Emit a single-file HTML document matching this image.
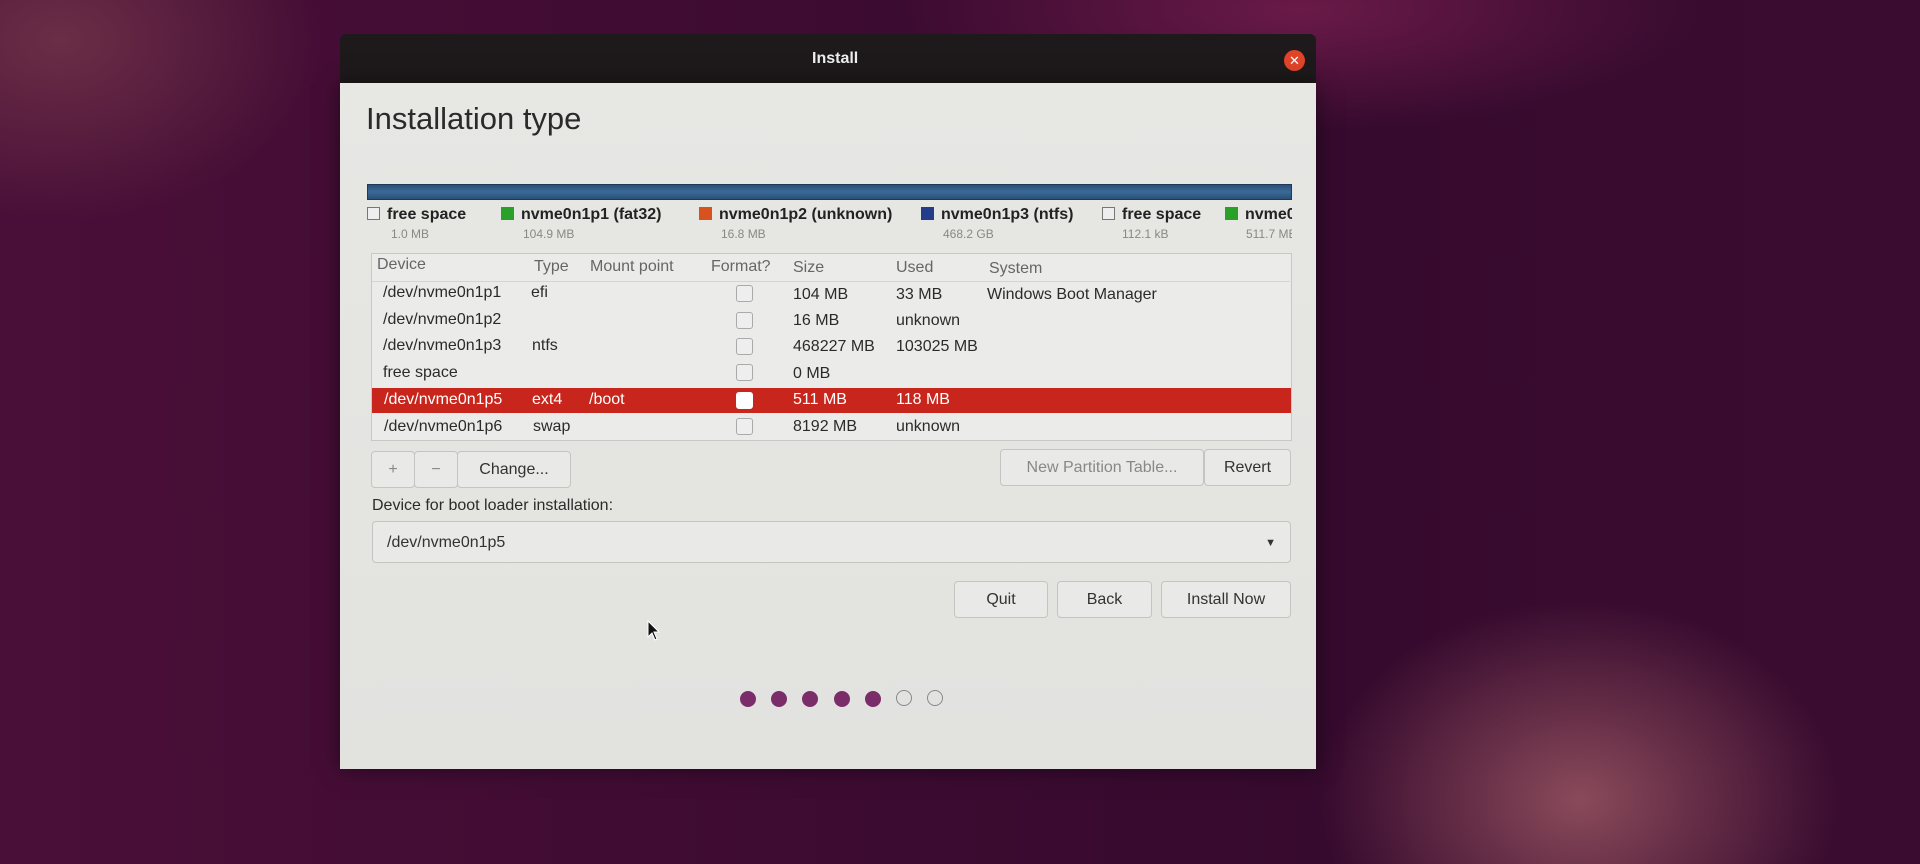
<!DOCTYPE html>
<html><head><meta charset="utf-8"><style>
*{margin:0;padding:0;box-sizing:border-box}
body{width:1920px;height:864px;overflow:hidden;position:relative;font-family:"Liberation Sans",sans-serif;
background:radial-gradient(ellipse 260px 180px at 60px 40px,#6a2e46 0%,rgba(106,46,70,0) 100%),
radial-gradient(ellipse 260px 200px at 1580px 800px,#8a4a5a 0%,rgba(138,74,90,0) 100%),
radial-gradient(ellipse 400px 120px at 1300px 10px,#6a1a48 0%,rgba(106,26,72,0) 100%),
linear-gradient(90deg,#4a0f38 0%,#3e0b32 40%,#360a2e 70%,#3a0c30 100%);}
.a{position:absolute;white-space:nowrap}
#title{left:340px;top:34px;width:976px;height:50px;background:#1e1a1c;border-radius:6px 6px 0 0;}
#win{left:340px;top:83px;width:976px;height:686px;background:linear-gradient(180deg,#e7e7e4,#e2e2df);box-shadow:0 0 20px rgba(0,0,0,.5)}
.t{color:#2b2b2b;font-size:16px}
.h{color:#666;font-size:16px}
.cb{position:absolute;width:17px;height:17px;border:1px solid #aaa;border-radius:3px;background:#eee;left:736px}
.btn{position:absolute;border:1px solid #c4c4c2;border-radius:4px;background:#e9e9e7;color:#333;font-size:16px;text-align:center}
.dot{position:absolute;width:16px;height:16px;border-radius:50%;background:#7b2d6a;top:691px}
.sq{display:inline-block;width:13px;height:13px;vertical-align:-1px;margin-right:7px}
.lg{position:absolute;top:206px;font-size:16px;font-weight:bold;color:#222;white-space:nowrap}
.ls{position:absolute;top:227px;font-size:12px;color:#888;white-space:nowrap}
</style></head><body>
<div class="a" id="title"></div>
<div class="a" style="left:812px;top:50px;color:#eee;font-size:16px;font-weight:bold">Install</div>
<div class="a" style="left:1284px;top:50px;width:21px;height:21px;border-radius:50%;background:#e0452a;color:#fff;font-size:13px;text-align:center;line-height:21px">✕</div>
<div class="a" id="win"></div>
<div class="a" style="left:366px;top:101px;font-size:31px;color:#2a2a2a">Installation type</div>
<div class="a" style="left:367px;top:184px;width:925px;height:16px;background:linear-gradient(180deg,#2d4e78,#3a6a98 50%,#2a4f76);border:1px solid #1d3a5a"></div>

<div class="lg" style="left:367px"><span class="sq" style="border:1px solid #777;background:#eee"></span>free space</div>
<div class="ls" style="left:391px">1.0 MB</div>
<div class="lg" style="left:501px"><span class="sq" style="background:#2aa02a"></span>nvme0n1p1 (fat32)</div>
<div class="ls" style="left:523px">104.9 MB</div>
<div class="lg" style="left:699px"><span class="sq" style="background:#d8521e"></span>nvme0n1p2 (unknown)</div>
<div class="ls" style="left:721px">16.8 MB</div>
<div class="lg" style="left:921px"><span class="sq" style="background:#243c8a"></span>nvme0n1p3 (ntfs)</div>
<div class="ls" style="left:943px">468.2 GB</div>
<div class="lg" style="left:1102px"><span class="sq" style="border:1px solid #777;background:#eee"></span>free space</div>
<div class="ls" style="left:1122px">112.1 kB</div>
<div class="lg" style="left:1225px;width:67px;overflow:hidden"><span class="sq" style="background:#2aa02a"></span>nvme0n1p5</div>
<div class="ls" style="left:1246px;width:46px;overflow:hidden">511.7 MB</div>

<div class="a" style="left:371px;top:253px;width:921px;height:188px;border:1px solid #c8c8c6;background:#ebebe9"></div>
<div class="a h" style="left:377px;top:256px">Device</div>
<div class="a h" style="left:534px;top:258px">Type</div>
<div class="a h" style="left:590px;top:258px">Mount point</div>
<div class="a h" style="left:711px;top:258px">Format?</div>
<div class="a h" style="left:793px;top:259px">Size</div>
<div class="a h" style="left:896px;top:259px">Used</div>
<div class="a h" style="left:989px;top:260px">System</div>
<div class="a" style="left:372px;top:281px;width:918px;height:1px;background:#d4d4d2"></div>

<div class="a t" style="left:383px;top:284px">/dev/nvme0n1p1</div><div class="a t" style="left:531px;top:284px">efi</div>
<div class="cb" style="top:285px"></div><div class="a t" style="left:793px;top:286px">104 MB</div><div class="a t" style="left:896px;top:286px">33 MB</div><div class="a t" style="left:987px;top:286px">Windows Boot Manager</div>

<div class="a t" style="left:383px;top:311px">/dev/nvme0n1p2</div>
<div class="cb" style="top:312px"></div><div class="a t" style="left:793px;top:312px">16 MB</div><div class="a t" style="left:896px;top:312px">unknown</div>

<div class="a t" style="left:383px;top:337px">/dev/nvme0n1p3</div><div class="a t" style="left:532px;top:337px">ntfs</div>
<div class="cb" style="top:338px"></div><div class="a t" style="left:793px;top:338px">468227 MB</div><div class="a t" style="left:896px;top:338px">103025 MB</div>

<div class="a t" style="left:383px;top:364px">free space</div>
<div class="cb" style="top:364px"></div><div class="a t" style="left:793px;top:365px">0 MB</div>

<div class="a" style="left:372px;top:388px;width:919px;height:25px;background:#c8261c"></div>
<div class="a t" style="left:384px;top:391px;color:#fff">/dev/nvme0n1p5</div><div class="a t" style="left:532px;top:391px;color:#fff">ext4</div><div class="a t" style="left:589px;top:391px;color:#fff">/boot</div>
<div class="cb" style="top:392px;background:#fff;border-color:#fff"></div><div class="a t" style="left:793px;top:391px;color:#fff">511 MB</div><div class="a t" style="left:896px;top:391px;color:#fff">118 MB</div>

<div class="a t" style="left:384px;top:418px">/dev/nvme0n1p6</div><div class="a t" style="left:533px;top:418px">swap</div>
<div class="cb" style="top:418px"></div><div class="a t" style="left:793px;top:418px">8192 MB</div><div class="a t" style="left:896px;top:418px">unknown</div>

<div class="btn" style="left:371px;top:451px;width:44px;height:37px;line-height:35px;color:#888">+</div>
<div class="btn" style="left:414px;top:451px;width:44px;height:37px;line-height:35px;color:#888">−</div>
<div class="btn" style="left:457px;top:451px;width:114px;height:37px;line-height:35px">Change...</div>
<div class="btn" style="left:1000px;top:449px;width:204px;height:37px;line-height:35px;color:#888">New Partition Table...</div>
<div class="btn" style="left:1204px;top:449px;width:87px;height:37px;line-height:35px">Revert</div>

<div class="a t" style="left:372px;top:497px">Device for boot loader installation:</div>
<div class="btn" style="left:372px;top:521px;width:919px;height:42px;text-align:left;padding-left:14px;line-height:42px">/dev/nvme0n1p5<span style="position:absolute;right:14px;font-size:11px">▼</span></div>

<div class="btn" style="left:954px;top:581px;width:94px;height:37px;line-height:35px">Quit</div>
<div class="btn" style="left:1057px;top:581px;width:95px;height:37px;line-height:35px">Back</div>
<div class="btn" style="left:1161px;top:581px;width:130px;height:37px;line-height:35px">Install Now</div>

<div class="dot" style="left:740px"></div>
<div class="dot" style="left:771px"></div>
<div class="dot" style="left:802px"></div>
<div class="dot" style="left:834px"></div>
<div class="dot" style="left:865px"></div>
<div class="dot" style="left:896px;background:none;border:1.5px solid #888;top:690px"></div>
<div class="dot" style="left:927px;background:none;border:1.5px solid #888;top:690px"></div>

<svg class="a" style="left:647px;top:620px" width="14" height="22"><path d="M1 1 L1 17 L5 13 L8 20 L10 19 L7 12 L12 12 Z" fill="#111" stroke="#fff" stroke-width="1"/></svg>
</body></html>
